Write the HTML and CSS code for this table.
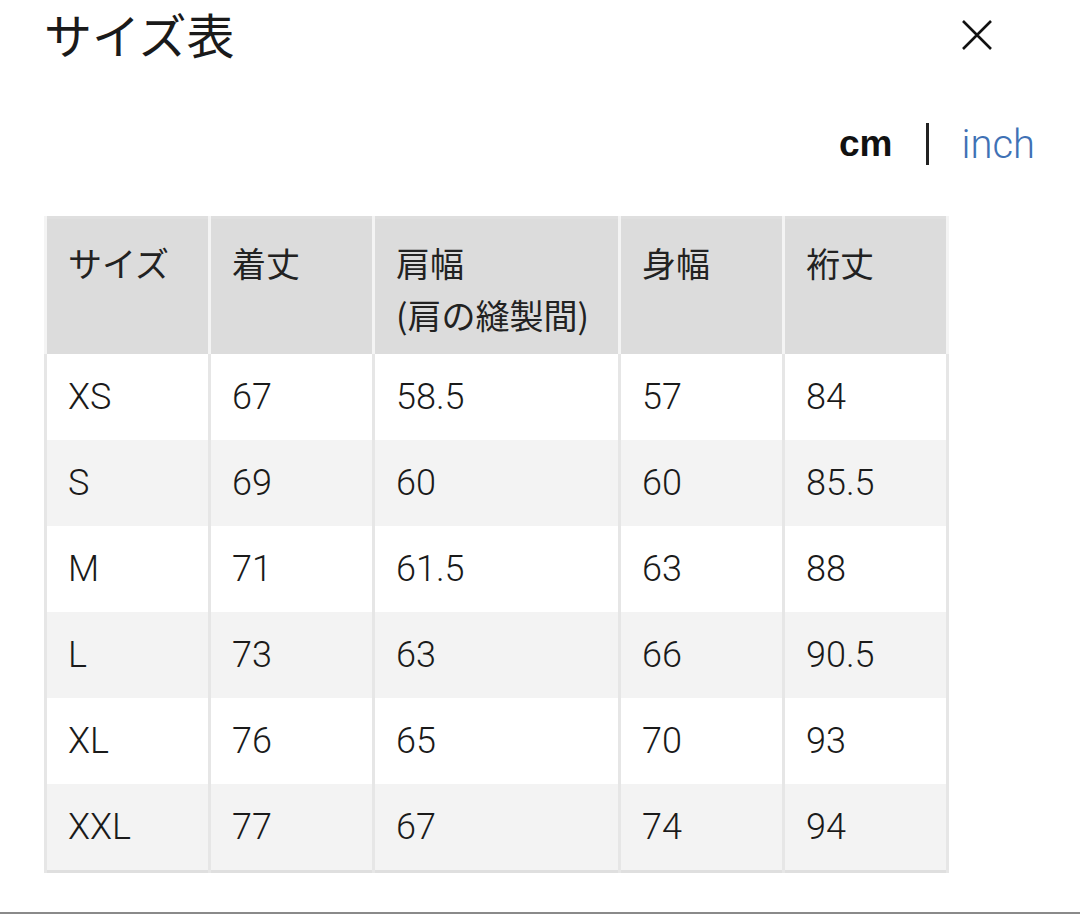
FILE: index.html
```html
<!DOCTYPE html>
<html lang="ja">
<head>
<meta charset="utf-8">
<link rel="stylesheet" href="styles.css">
</head>
<body>
<div class="page">
  <header class="top">
    <h1 class="title">サイズ表</h1>
    <button class="close" aria-label="閉じる">
      <svg width="34" height="34" viewBox="0 0 34 34"><path d="M3 3 L31 31 M31 3 L3 31" stroke="#111" stroke-width="2.6" fill="none"/></svg>
    </button>
  </header>
  <div class="units">
    <span class="cm">cm</span>
    <span class="sep"></span>
    <span class="inch">inch</span>
  </div>
  <table class="sizes">
    <colgroup><col class="c1"><col class="c1"><col class="c2"><col class="c1"><col class="c1"></colgroup>
    <thead>
      <tr><th>サイズ</th><th>着丈</th><th>肩幅<br>(肩の縫製間)</th><th>身幅</th><th>裄丈</th></tr>
    </thead>
    <tbody>
      <tr><td>XS</td><td>67</td><td>58.5</td><td>57</td><td>84</td></tr>
      <tr><td>S</td><td>69</td><td>60</td><td>60</td><td>85.5</td></tr>
      <tr><td>M</td><td>71</td><td>61.5</td><td>63</td><td>88</td></tr>
      <tr><td>L</td><td>73</td><td>63</td><td>66</td><td>90.5</td></tr>
      <tr><td>XL</td><td>76</td><td>65</td><td>70</td><td>93</td></tr>
      <tr><td>XXL</td><td>77</td><td>67</td><td>74</td><td>94</td></tr>
    </tbody>
  </table>
</div>
<div class="bottom-line"></div>
</body>
</html>
```
FILE: styles.css
```css
html, body {
  margin: 0;
  padding: 0;
  background: #fff;
}
body {
  width: 1080px;
  height: 914px;
  position: relative;
  overflow: hidden;
  font-family: "Liberation Sans", "Noto Sans CJK JP", sans-serif;
  color: #222;
}
.page {
  padding: 0 44px 0 44px;
}
.top {
  display: flex;
  justify-content: space-between;
  align-items: center;
  height: 70px;
}
.title {
  margin: 0 0 0 0;
  font-family: "Noto Sans CJK JP", sans-serif;
  font-weight: 400;
  font-size: 48px;
  line-height: 70px;
  color: #1a1a1a;
  position: relative;
  top: -2px;
}
.close {
  background: none;
  border: 0;
  padding: 0;
  margin-right: 42px;
  width: 34px;
  height: 34px;
  display: flex;
  align-items: center;
  justify-content: center;
}
.units {
  display: flex;
  justify-content: flex-end;
  align-items: center;
  margin-top: 52px;
  height: 44px;
  padding-right: 1px;
}
.cm {
  font-weight: 700;
  font-size: 37px;
  color: #111;
}
.sep {
  display: inline-block;
  width: 3px;
  height: 42px;
  background: #222;
  margin: 0 32px 0 34px;
}
.inch {
  font-family: "Roboto", "Liberation Sans", sans-serif;
  font-weight: 300;
  font-size: 40px;
  color: #3f71b5;
}
.sizes {
  margin-top: 50px;
  border-collapse: collapse;
  table-layout: fixed;
  width: 902px;
  border: 3px solid #dfdfdf;
  font-size: 36px;
}
.c1 { width: 164px; }
.c2 { width: 246px; }
.sizes th,
.sizes td {
  text-align: left;
  padding: 0 0 0 21px;
  border-left: 3px solid #e6e6e6;
  border-right: 3px solid #e6e6e6;
}
.sizes th {
  background: #dcdcdc;
  font-family: "Noto Sans CJK JP", sans-serif;
  font-weight: 400;
  font-size: 34px;
  vertical-align: top;
  height: 136px;
  box-sizing: border-box;
  padding-top: 18px;
  line-height: 52px;
  color: #222;
  border-left-color: #f4f4f4;
  border-right-color: #f4f4f4;
}
.sizes td {
  height: 86px;
  vertical-align: middle;
  font-family: "Roboto", "Liberation Sans", sans-serif;
  font-weight: 300;
  color: #1a1a1a;
}
.sizes tbody tr:nth-child(even) td {
  background: #f3f3f3;
}
.bottom-line {
  position: absolute;
  left: 0;
  right: 0;
  bottom: 0;
  height: 2px;
  background: #8a8a8a;
}
```
